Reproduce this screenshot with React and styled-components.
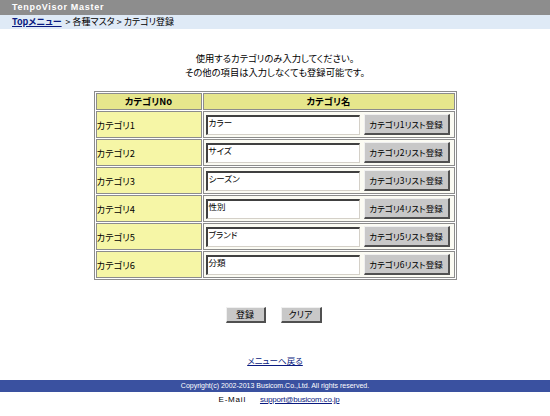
import React from "react";
import styled, { createGlobalStyle } from "styled-components";

const Global = createGlobalStyle`
  html, body { margin: 0; padding: 0; background: #ffffff; }
  body {
    font-family: "Liberation Sans", "Noto Sans CJK JP", sans-serif;
    font-size: 10px;
    color: #000;
  }
`;

const jp = `"Noto Sans CJK JP", "Liberation Sans", sans-serif`;

const Page = styled.div`
  width: 550px;
  height: 416px;
  display: flex;
  flex-direction: column;
  overflow: hidden;
`;

const TitleBar = styled.div`
  height: 15px;
  background: #8d8d8d;
  color: #ffffff;
  font-family: "Liberation Sans", sans-serif;
  font-weight: bold;
  font-size: 9px;
  line-height: 15px;
  padding-left: 12px;
  letter-spacing: 0.7px;
`;

const Crumbs = styled.div`
  height: 14px;
  background: #dfeaf6;
  font-family: ${jp};
  font-feature-settings: "palt";
  font-size: 9px;
  line-height: 14px;
  padding-left: 12px;
  display: flex;
  gap: 4px;
`;

const CrumbLink = styled.a`
  color: #0a1a80;
  text-decoration: underline;
  font-weight: bold;
`;

const Message = styled.div`
  margin-top: 22px;
  text-align: center;
  font-family: ${jp};
  font-feature-settings: "palt";
  font-size: 9.3px;
  line-height: 14px;
`;

const Table = styled.table`
  margin: 12px auto 0;
  width: 363px;
  border: 1px solid #8c8c8c;
  border-spacing: 1px;
  border-collapse: separate;
  font-family: ${jp};
  font-feature-settings: "palt";
  font-size: 9.3px;
`;

const HeadCell = styled.th`
  height: 15px;
  padding: 0;
  background: #e6e68c;
  border: 1px solid #8c8c8c;
  font-weight: bold;
  font-size: 9.3px;
  line-height: 15px;
  width: ${(p) => p.$w || "auto"};
`;

const NoCell = styled.td`
  height: 25px;
  padding: 0;
  background: #f6f6a6;
  border: 1px solid #8c8c8c;
  width: 104px;
  vertical-align: middle;
`;

const NameCell = styled.td`
  height: 25px;
  padding: 0;
  background: #fbfbf3;
  border: 1px solid #8c8c8c;
`;

const NameRow = styled.div`
  display: flex;
  align-items: center;
  padding-left: 2px;
  gap: 4px;
`;

const TextBox = styled.div`
  box-sizing: border-box;
  width: 154px;
  height: 20px;
  background: #ffffff;
  border-top: 2px solid #404040;
  border-left: 2px solid #404040;
  border-right: 1px solid #d4d0c8;
  border-bottom: 1px solid #d4d0c8;
  font-size: 8.5px;
  line-height: 10px;
  padding-left: 1px;
  text-align: left;
`;

const Button = styled.div`
  box-sizing: border-box;
  width: ${(p) => p.$w}px;
  height: ${(p) => p.$h}px;
  background: #c8c8c8;
  border-top: 1px solid #f0f0f0;
  border-left: 1px solid #f0f0f0;
  border-right: 2px solid #505050;
  border-bottom: 2px solid #505050;
  display: flex;
  align-items: center;
  justify-content: center;
  font-family: ${jp};
  font-feature-settings: "palt";
  font-size: ${(p) => p.$fs || 8.5}px;
  color: #000;
`;

const Actions = styled.div`
  margin-top: 27px;
  display: flex;
  justify-content: center;
  gap: 15px;
  padding-right: 3px;
`;

const BackLink = styled.a`
  margin-top: 30px;
  align-self: center;
  color: #0a1a80;
  text-decoration: underline;
  font-family: ${jp};
  font-feature-settings: "palt";
  font-size: 8.5px;
  line-height: 14px;
`;

const Footer = styled.div`
  margin-top: 13px;
  height: 12px;
  background: #3a51a0;
  color: #ffffff;
  text-align: center;
  font-family: "Liberation Sans", sans-serif;
  font-size: 7px;
  line-height: 12px;
`;

const Contact = styled.div`
  margin-top: 2px;
  display: flex;
  justify-content: center;
  gap: 14px;
  font-family: "Liberation Sans", sans-serif;
  font-size: 8px;
  line-height: 12px;
  padding-left: 8px;
`;

const MailLabel = styled.span`
  letter-spacing: 0.8px;
`;

const Mail = styled.a`
  color: #0a1a80;
  text-decoration: underline;
  letter-spacing: -0.2px;
`;

const rows = [
  { no: "カテゴリ1", name: "カラー" },
  { no: "カテゴリ2", name: "サイズ" },
  { no: "カテゴリ3", name: "シーズン" },
  { no: "カテゴリ4", name: "性別" },
  { no: "カテゴリ5", name: "ブランド" },
  { no: "カテゴリ6", name: "分類" },
];

export default function App() {
  return (
    <>
      <Global />
      <Page>
        <TitleBar>TenpoVisor Master</TitleBar>
        <Crumbs>
          <CrumbLink href="#">Topメニュー</CrumbLink>
          <span>&gt; 各種マスタ &gt; カテゴリ登録</span>
        </Crumbs>
        <Message>
          使用するカテゴリのみ入力してください。
          <br />
          その他の項目は入力しなくても登録可能です。
        </Message>
        <Table>
          <thead>
            <tr>
              <HeadCell $w="104px">カテゴリNo</HeadCell>
              <HeadCell>カテゴリ名</HeadCell>
            </tr>
          </thead>
          <tbody>
            {rows.map((r, i) => (
              <tr key={r.no}>
                <NoCell>{r.no}</NoCell>
                <NameCell>
                  <NameRow>
                    <TextBox>{r.name}</TextBox>
                    <Button $w={86} $h={21}>
                      カテゴリ{i + 1}リスト登録
                    </Button>
                  </NameRow>
                </NameCell>
              </tr>
            ))}
          </tbody>
        </Table>
        <Actions>
          <Button $w={40} $h={16} $fs={9}>登録</Button>
          <Button $w={41} $h={16} $fs={9}>クリア</Button>
        </Actions>
        <BackLink href="#">メニューへ戻る</BackLink>
        <Footer>Copyright(c) 2002-2013 Busicom.Co.,Ltd. All rights reserved.</Footer>
        <Contact>
          <MailLabel>E-Mail</MailLabel>
          <Mail href="#">support@busicom.co.jp</Mail>
        </Contact>
      </Page>
    </>
  );
}
